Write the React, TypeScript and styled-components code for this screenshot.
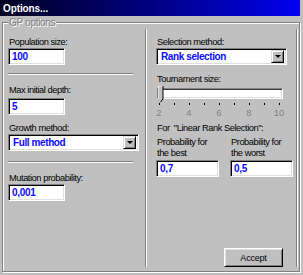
import React from "react";
import styled, { createGlobalStyle } from "styled-components";

const Global = createGlobalStyle`
  html, body { margin: 0; padding: 0; background: #c0c0c0; }
  body { width: 303px; height: 275px; overflow: hidden; font-family: "Liberation Sans", Arial, sans-serif; }
  * { box-sizing: border-box; }
`;

const Window = styled.div`
  width: 303px;
  height: 275px;
  background: #c0c0c0;
  display: flex;
  flex-direction: column;
`;

const TitleBar = styled.div`
  height: 16px;
  width: 300px;
  flex: none;
  display: flex;
  align-items: center;
  padding-left: 3px;
  background: linear-gradient(to right, #000020, #000080 50%, #0000f0);
  color: #fff;
  font-weight: bold;
  font-size: 10px;
  letter-spacing: -0.1px;
`;

const Body = styled.div`
  flex: 1;
  padding: 6px 3px 3px 2px;
  display: flex;
`;

const GroupBox = styled.div`
  position: relative;
  flex: 1;
  border: 1px solid #808080;
  box-shadow: inset 1px 1px 0 #fff, 1px 1px 0 #fff;
  display: flex;
`;

const Legend = styled.span`
  position: absolute;
  left: 5px;
  top: -6px;
  padding: 0 1px;
  background: #c0c0c0;
  color: #808080;
  text-shadow: 1px 1px 0 #fff;
  font-size: 10px;
  line-height: 11px;
  letter-spacing: -0.3px;
`;

const LeftColumn = styled.div`
  width: 142px;
  padding: 14px 0 0 5px;
  display: flex;
  flex-direction: column;
  align-items: flex-start;
`;

const RightPanel = styled.div`
  width: 152px;
  margin: 6px 0 4px 0;
  border-left: 1px solid #808080;
  border-right: 1px solid #808080;
  box-shadow: inset 1px 0 0 #fff, 1px 0 0 #fff;
  padding: 8px 0 0 10px;
  display: flex;
  flex-direction: column;
  align-items: flex-start;
`;

const Label = styled.div<{ $mt?: number }>`
  margin-top: ${(p) => p.$mt ?? 0}px;
  font-size: 9.3px;
  line-height: 11px;
  letter-spacing: -0.45px;
  color: #000;
  white-space: pre;
  padding-left: 1px;
`;

const Separator = styled.div<{ $mt: number }>`
  margin-top: ${(p) => p.$mt}px;
  width: 125px;
  height: 2px;
  border-top: 1px solid #808080;
  border-bottom: 1px solid #fff;
`;

const Field = styled.input<{ $mt?: number; $w?: number }>`
  margin-top: ${(p) => p.$mt ?? 0}px;
  width: ${(p) => p.$w ?? 57}px;
  height: 17px;
  padding: 0 0 0 3px;
  border: 1px solid;
  border-color: #808080 #fff #fff #808080;
  box-shadow: inset 1px 1px 0 #000, inset -1px -1px 0 #dfdfdf;
  background: #fff;
  color: #0a0aff;
  font-family: "Liberation Sans", Arial, sans-serif;
  font-weight: bold;
  font-size: 10px;
  letter-spacing: -0.3px;
  outline: none;
`;

const Select = styled.div<{ $mt?: number }>`
  margin-top: ${(p) => p.$mt ?? 0}px;
  width: 131px;
  height: 17px;
  padding: 2px;
  border: 1px solid;
  border-color: #808080 #fff #fff #808080;
  box-shadow: inset 1px 1px 0 #000, inset -1px -1px 0 #dfdfdf;
  background: #fff;
  display: flex;
  align-items: center;
`;

const SelectText = styled.span`
  flex: 1;
  padding-left: 2px;
  color: #0a0aff;
  font-weight: bold;
  font-size: 10px;
  letter-spacing: -0.4px;
`;

const ArrowButton = styled.span`
  width: 13px;
  height: 13px;
  background: #c0c0c0;
  border: 1px solid;
  border-color: #dfdfdf #000 #000 #dfdfdf;
  box-shadow: inset 1px 1px 0 #fff, inset -1px -1px 0 #808080;
  display: flex;
  align-items: center;
  justify-content: center;
  &::after {
    content: "";
    border-left: 3px solid transparent;
    border-right: 3px solid transparent;
    border-top: 3px solid #000;
  }
`;

const Slider = styled.div`
  position: relative;
  margin-top: 3px;
  width: 130px;
  display: flex;
  flex-direction: column;
`;

const Track = styled.div`
  margin-left: 1px;
  width: 126px;
  height: 11px;
  border: 1px solid;
  border-color: #808080 #fff #fff #808080;
  box-shadow: inset 1px 1px 0 #404040, inset -1px -1px 0 #dfdfdf;
  background: #fff;
`;

const Thumb = styled.svg`
  position: absolute;
  left: 2px;
  top: -2px;
`;

const Ticks = styled.div`
  margin: 4px 0 0 3px;
  width: 121px;
  display: flex;
  justify-content: space-between;
`;

const Tick = styled.span`
  width: 1px;
  height: 2px;
  background: #000;
`;

const Numbers = styled.div`
  margin: 2px 0 0 -12px;
  display: grid;
  grid-template-columns: repeat(5, 30px);
  color: #808080;
  font-size: 9.5px;
  line-height: 11px;
  text-align: center;
`;

const Pair = styled.div`
  display: flex;
  gap: 11px;
`;

const PairCol = styled.div`
  display: flex;
  flex-direction: column;
  align-items: flex-start;
`;

const Button = styled.button`
  margin-top: auto;
  align-self: flex-end;
  margin-right: 13px;
  width: 59px;
  height: 19px;
  padding: 0;
  background: #c0c0c0;
  border: 1px solid;
  border-color: #fff #000 #000 #fff;
  box-shadow: inset 1px 1px 0 #dfdfdf, inset -1px -1px 0 #808080;
  font-family: "Liberation Sans", Arial, sans-serif;
  font-size: 9px;
  letter-spacing: -0.2px;
  color: #000;
`;

export default function App() {
  return (
    <>
      <Global />
      <Window>
        <TitleBar>Options...</TitleBar>
        <Body>
          <GroupBox>
            <Legend>GP options</Legend>
            <LeftColumn>
              <Label>Population size:</Label>
              <Field defaultValue="100" readOnly />
              <Separator $mt={8} />
              <Label $mt={10}>Max initial depth:</Label>
              <Field $mt={2} defaultValue="5" readOnly />
              <Label $mt={8}>Growth method:</Label>
              <Select>
                <SelectText>Full method</SelectText>
                <ArrowButton />
              </Select>
              <Separator $mt={10} />
              <Label $mt={10}>Mutation probability:</Label>
              <Field defaultValue="0,001" readOnly />
            </LeftColumn>
            <RightPanel>
              <Label>Selection method:</Label>
              <Select>
                <SelectText>Rank selection</SelectText>
                <ArrowButton />
              </Select>
              <Label $mt={9}>Tournament size:</Label>
              <Slider>
                <Track />
                <Thumb width="6" height="17" viewBox="0 0 6 17">
                  <polygon points="0,0 5,0 5,13 2.5,16 0,13" fill="#c0c0c0" />
                  <polyline points="0,13 0,0 5,0" fill="none" stroke="#fff" strokeWidth="1" />
                  <polyline points="5,0 5,13 2.5,16" fill="none" stroke="#000" strokeWidth="1" />
                </Thumb>
                <Ticks>
                  {Array.from({ length: 9 }).map((_, i) => (
                    <Tick key={i} />
                  ))}
                </Ticks>
                <Numbers>
                  {["2", "4", "6", "8", "10"].map((n) => (
                    <span key={n}>{n}</span>
                  ))}
                </Numbers>
              </Slider>
              <Label $mt={5}>{'For  "Linear Rank Selection":'}</Label>
              <Pair>
                <PairCol>
                  <Label $mt={3}>Probability for</Label>
                  <Label>the best</Label>
                  <Field $mt={1} $w={63} defaultValue="0,7" readOnly />
                </PairCol>
                <PairCol>
                  <Label $mt={3}>Probability for</Label>
                  <Label>the worst</Label>
                  <Field $mt={1} $w={63} defaultValue="0,5" readOnly />
                </PairCol>
              </Pair>
              <Button>Accept</Button>
            </RightPanel>
          </GroupBox>
        </Body>
      </Window>
    </>
  );
}
